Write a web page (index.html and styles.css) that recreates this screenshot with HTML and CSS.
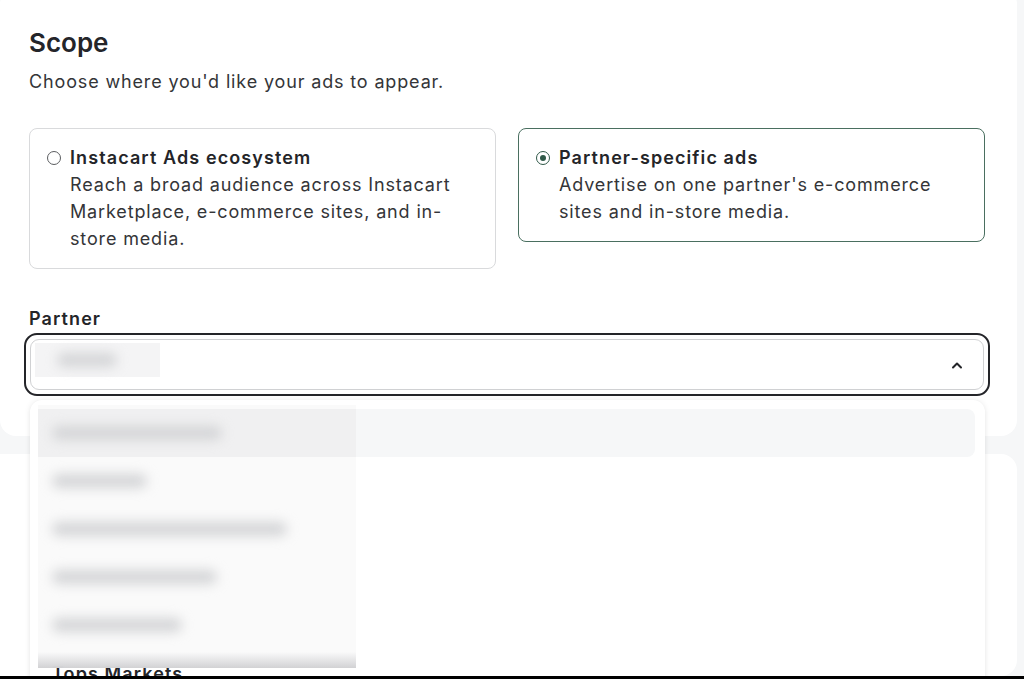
FILE: index.html
```html
<!DOCTYPE html>
<html lang="en">
<head>
<meta charset="utf-8">
<title>Scope</title>
<link rel="stylesheet" href="styles.css">
</head>
<body>
<div class="viewport">
  <div class="page">
    <section class="card card-scope">
      <h2 class="title">Scope</h2>
      <p class="subtitle">Choose where you'd like your ads to appear.</p>
      <div class="options">
        <label class="option">
          <span class="radio"></span>
          <span class="option-text">
            <span class="option-title">Instacart Ads ecosystem</span>
            <span class="option-desc">Reach a broad audience across Instacart Marketplace, e-commerce sites, and in-store media.</span>
          </span>
        </label>
        <label class="option option-selected">
          <span class="radio radio-on"><span class="dot"></span></span>
          <span class="option-text">
            <span class="option-title">Partner-specific ads</span>
            <span class="option-desc">Advertise on one partner's e-commerce sites and in-store media.</span>
          </span>
        </label>
      </div>
      <div class="field">
        <div class="field-label">Partner</div>
        <div class="select-wrap">
          <div class="select">
            <div class="select-value"><span class="blur-bar bar-value"></span></div>
            <svg class="chevron" width="12" height="8" viewBox="0 0 12 8"><path d="M2 6.5 L6 2.5 L10 6.5" fill="none" stroke="#242529" stroke-width="2" stroke-linecap="round" stroke-linejoin="round"/></svg>
          </div>
          <div class="menu">
            <div class="menu-list">
              <div class="menu-item active"></div>
              <div class="menu-item"></div>
              <div class="menu-item"></div>
              <div class="menu-item"></div>
              <div class="menu-item"></div>
              <div class="menu-item"><span class="item-text">Tops Markets</span></div>
            </div>
            <div class="menu-blur">
              <div class="blur-row blur-row-active"><span class="blur-bar" style="width:170px"></span></div>
              <div class="blur-row"><span class="blur-bar" style="width:95px"></span></div>
              <div class="blur-row"><span class="blur-bar" style="width:235px"></span></div>
              <div class="blur-row"><span class="blur-bar" style="width:165px"></span></div>
              <div class="blur-row"><span class="blur-bar" style="width:130px"></span></div>
              <div class="blur-fade"></div>
            </div>
          </div>
        </div>
      </div>
    </section>
    <section class="card card-next"></section>
  </div>
  <div class="bottom-bar"></div>
</div>
</body>
</html>
```

FILE: styles.css
```css
* { box-sizing: border-box; }
html, body { margin: 0; padding: 0; }
body {
  background: #f6f7f8;
  font-family: "Inter", "Noto Sans", sans-serif;
  color: #343538;
  height: 679px;
  overflow: hidden;
}
.viewport {
  height: 679px;
  display: flex;
  flex-direction: column;
}
.page {
  flex: 1;
  min-height: 0;
  overflow: hidden;
  display: flex;
  flex-direction: column;
  gap: 18px;
  padding-right: 7px;
  margin-top: -12px;
}
.card {
  background: #ffffff;
  border-radius: 16px;
}
.card-scope {
  height: 448px;
  flex: none;
  padding: 38px 32px 0 29px;
  position: relative;
  z-index: 2;
}
.card-next {
  flex: 1;
  margin-left: -16px;
}
.title {
  margin: 0;
  font-size: 26px;
  line-height: 33px;
  font-weight: 600;
  color: #242529;
}
.subtitle {
  margin: 9px 0 0;
  font-size: 18px;
  line-height: 27px;
  color: #343538;
  letter-spacing: 0.85px;
}
.options {
  margin-top: 33px;
  display: grid;
  grid-template-columns: 1fr 1fr;
  gap: 22px;
  align-items: start;
}
.option {
  display: flex;
  gap: 9px;
  border: 1px solid #d9dadc;
  border-radius: 8px;
  padding: 15px 16px 16px 17px;
  font-size: 18px;
  line-height: 27px;
  letter-spacing: 0.85px;
}
.option-selected {
  border-color: #4a6f60;
}
.radio {
  flex: none;
  width: 14px;
  height: 14px;
  margin-top: 7px;
  border: 1px solid #5b5d60;
  border-radius: 50%;
  display: flex;
  align-items: center;
  justify-content: center;
}
.radio-on {
  border-color: #2f5848;
  border-width: 1.5px;
}
.dot {
  width: 6px;
  height: 6px;
  border-radius: 50%;
  background: #2f5848;
}
.option-text {
  display: flex;
  flex-direction: column;
}
.option-title {
  font-weight: 600;
  color: #242529;
  letter-spacing: 1.1px;
}
.option-desc {
  color: #343538;
}
.field {
  margin-top: 36px;
}
.field-label {
  font-size: 18px;
  line-height: 27px;
  font-weight: 600;
  color: #242529;
  letter-spacing: 1.1px;
  margin-bottom: 1px;
}
.select-wrap {
  position: relative;
  margin-left: -5px;
  margin-right: -5px;
}
.select {
  border: 2px solid #242529;
  border-radius: 13px;
  padding: 4px;
  position: relative;
}
.select::before {
  content: "";
  display: block;
  height: 49px;
  border: 1px solid #d0d1d3;
  border-radius: 9px;
}
.select-value {
  position: absolute;
  left: 9px;
  top: 8px;
  width: 125px;
  height: 34px;
  background: #f4f4f5;
  display: flex;
  align-items: center;
  padding-left: 22px;
}
.bar-value {
  width: 60px;
}
.chevron {
  position: absolute;
  right: 25px;
  top: 26px;
}
.blur-bar {
  display: block;
  height: 14px;
  border-radius: 7px;
  background: #d4d5d7;
  filter: blur(6px);
}
.menu {
  position: absolute;
  left: 6px;
  right: 5px;
  top: 67px;
  height: 300px;
  background: #ffffff;
  border-radius: 12px;
  box-shadow: 0 0 6px rgba(0, 0, 0, 0.08), 0 2px 4px rgba(0, 0, 0, 0.04);
  padding: 9px 10px 0 8px;
  z-index: 5;
}
.menu-list {
  display: flex;
  flex-direction: column;
}
.menu-item {
  height: 48px;
  border-radius: 8px;
  display: flex;
  align-items: center;
  padding-left: 14px;
}
.menu-item.active {
  background: #f6f7f8;
}
.item-text {
  font-size: 18px;
  font-weight: 600;
  color: #242529;
  letter-spacing: 1.1px;
}
.menu-blur {
  position: absolute;
  left: 8px;
  top: 5px;
  width: 318px;
  height: 263px;
  background: rgba(250, 250, 250, 0.92);
  padding-top: 4px;
  overflow: hidden;
}
.blur-row {
  height: 48px;
  display: flex;
  align-items: center;
  padding-left: 14px;
}
.blur-row-active {
  background: #f0f0f1;
}
.blur-fade {
  position: absolute;
  left: 0;
  right: 0;
  bottom: 0;
  height: 16px;
  background: linear-gradient(to bottom, rgba(220, 220, 222, 0), rgba(205, 205, 208, 0.9));
}
.bottom-bar {
  height: 3px;
  flex: none;
  background: #000000;
}
```
